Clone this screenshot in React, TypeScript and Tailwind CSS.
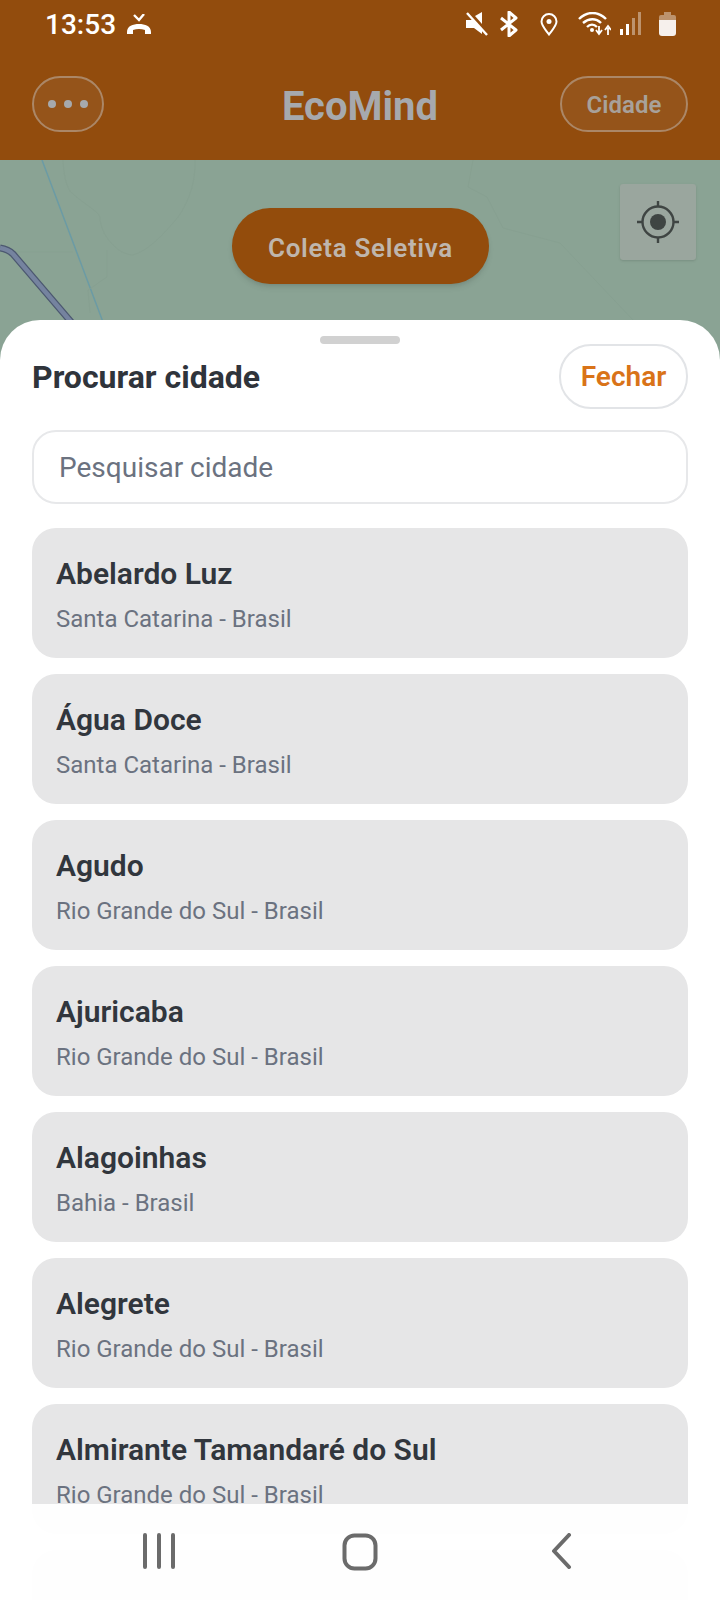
import React from 'react';

const cities = [
  { name: 'Abelardo Luz', state: 'Santa Catarina - Brasil' },
  { name: 'Água Doce', state: 'Santa Catarina - Brasil' },
  { name: 'Agudo', state: 'Rio Grande do Sul - Brasil' },
  { name: 'Ajuricaba', state: 'Rio Grande do Sul - Brasil' },
  { name: 'Alagoinhas', state: 'Bahia - Brasil' },
  { name: 'Alegrete', state: 'Rio Grande do Sul - Brasil' },
  { name: 'Almirante Tamandaré do Sul', state: 'Rio Grande do Sul - Brasil' },
];

const StatusBar = () => (
  <div className="h-[48px] pl-[45px] pr-[44px] flex items-center justify-between text-white">
    <div className="flex items-center gap-[10px] pt-[2px]">
      <span className="text-[28px] font-medium leading-none">13:53</span>
      {/* call ended */}
      <svg width="26" height="22" viewBox="0 0 26 22" fill="none">
        <path d="M8 1l5 5 5-6" stroke="#fff" strokeWidth="2.4" />
        <path d="M1 18c0-6 6-8 12-8s12 2 12 8v2h-6v-4c-4-1.500-8-1.500-12 0v4H1z" fill="#fff" />
      </svg>
    </div>
    <div className="flex items-center">
      {/* mute */}
      <svg width="24" height="24" viewBox="0 0 24 24" fill="none" className="mr-[10px]">
        <path d="M1 8h5l2-1 9 10v5l-8-6H1z M10 4l7-4v12z" fill="#fff" />
        <path d="M2 1l20 22" stroke="#fff" strokeWidth="2.4" />
      </svg>
      {/* bluetooth */}
      <svg width="20" height="26" viewBox="0 0 20 26" fill="none" className="mr-[21px]">
        <path d="M2 7l15 12-7 6V1l7 6L2 19" stroke="#fff" strokeWidth="3" strokeLinejoin="round" />
      </svg>
      {/* location */}
      <svg width="18" height="23" viewBox="0 0 18 23" fill="none" className="mr-[20px]">
        <path d="M9 21.500C5 16 1.500 12.500 1.500 8.500a7.500 7.500 0 0115 0c0 4-3.500 7.500-7.500 13z" stroke="#fff" strokeWidth="2" />
        <circle cx="9" cy="8.500" r="2.500" fill="#fff" />
      </svg>
      {/* wifi with arrows */}
      <svg width="33" height="24" viewBox="0 0 33 24" fill="none" className="mr-[9px]">
        <path d="M1 7c8-8 19-8 27 0" stroke="#fff" strokeWidth="2.400" />
        <path d="M5 11c6-5 13-5 18 0" stroke="#fff" strokeWidth="2.400" />
        <path d="M9 15c3-3 7-3 10 0" stroke="#fff" strokeWidth="2.400" />
        <circle cx="14" cy="18" r="2" fill="#fff" />
        <path d="M21 14v7m-3-3l3 4 3-4" stroke="#fff" strokeWidth="1.800" />
        <path d="M30 23v-7m-3 2l3-4 3 4" stroke="#fff" strokeWidth="1.800" />
      </svg>
      {/* signal */}
      <svg width="22" height="24" viewBox="0 0 22 24" className="mr-[17px]">
        <rect x="0" y="17" width="3" height="6" fill="#fff" />
        <rect x="6" y="12" width="3" height="11" fill="#fff" />
        <rect x="12" y="6" width="3" height="17" fill="#ffffff" fillOpacity="0.4" />
        <rect x="18" y="0" width="3" height="23" fill="#ffffff" fillOpacity="0.4" />
      </svg>
      {/* battery */}
      <svg width="17" height="24" viewBox="0 0 17 24">
        <path d="M5 0h7v3h3a2 2 0 012 2v3H0V5a2 2 0 012-2h3z" fill="#ffffff" fillOpacity="0.4" />
        <path d="M0 8h17v13a3 3 0 01-3 3H3a3 3 0 01-3-3z" fill="#f6f0ec" />
      </svg>
    </div>
  </div>
);

const TopBar = () => (
  <div className="h-[112px] px-[32px] flex items-center justify-between">
    <div className="w-[128px]">
      <div className="w-[72px] h-[56px] rounded-full border-2 border-[#ab8767] bg-[#95541a] flex items-center justify-center gap-[8px]">
        <span className="w-[8px] h-[8px] rounded-full bg-[#a6a9ad]"></span>
        <span className="w-[8px] h-[8px] rounded-full bg-[#a6a9ad]"></span>
        <span className="w-[8px] h-[8px] rounded-full bg-[#a6a9ad]"></span>
      </div>
    </div>
    <div className="pt-[5px] text-[40px] font-bold text-[#a6a9ad] leading-none">EcoMind</div>
    <div className="w-[128px] h-[56px] rounded-full border-2 border-[#ab8767] bg-[#95541a] flex items-center justify-center">
      <span className="pt-[2px] text-[24px] font-semibold text-[#a8a19a]">Cidade</span>
    </div>
  </div>
);

const MapArea = () => (
  <div className="relative h-[200px] -mb-[40px] bg-[#8aa394] overflow-hidden">
    {/* map lines */}
    <svg width="720" height="200" viewBox="0 0 720 200" fill="none" className="absolute inset-0">
      <path d="M42 0 L 106 170" stroke="#6b9ba5" strokeWidth="1.500" />
      <path d="M63 0 C 64 20 68 30 72 33 C 85 45 97 50 100 57 C 100 75 118 95 133 95 C 150 90 165 72 173 63 C 185 50 196 27 195 0" stroke="#87a091" strokeWidth="1" />
      <path d="M10 92 L 73 92 M107 90 L 107 117 L 88 130 L 90 153" stroke="#87a091" strokeWidth="1" />
      <path d="M473 0 L 468 27 L 487 37 L 503 68 L 560 83 L 633 160" stroke="#87a091" strokeWidth="1" />
      <path d="M0 88 C 6 89 10 91 13 94 L 72 163" stroke="#4c5870" strokeWidth="7" />
      <path d="M0 88 C 6 89 10 91 13 94 L 72 163" stroke="#75839f" strokeWidth="4.500" />
    </svg>
    <div className="absolute left-[232px] top-[48px] w-[257px] h-[76px] rounded-full bg-[#934c0c] shadow-md flex items-center justify-center">
      <span className="pt-[5px] text-[26px] font-semibold tracking-[0.7px] text-[#bfb6ad]">Coleta Seletiva</span>
    </div>
    <div className="absolute left-[620px] top-[24px] w-[76px] h-[76px] rounded-[3px] bg-[#9aa69e] shadow-sm flex items-center justify-center">
      <svg width="42" height="42" viewBox="0 0 42 42" fill="none">
        <circle cx="21" cy="21" r="15.500" stroke="#3f4543" strokeWidth="2.400" />
        <circle cx="21" cy="21" r="8" fill="#3f4543" />
        <path d="M21 0v6M21 36v6M0 21h6M36 21h6" stroke="#3f4543" strokeWidth="2.400" />
      </svg>
    </div>
  </div>
);

const CityCard = ({ name, state }: { name: string; state: string }) => (
  <div className="h-[130px] shrink-0 rounded-[24px] bg-[#e6e6e7] pl-[24px] pt-[26px]">
    <div className="text-[30px] font-semibold leading-[40px] text-[#31363d]">{name}</div>
    <div className="mt-[8px] text-[24px] leading-[34px] text-[#6b7280]">{state}</div>
  </div>
);

export default function App() {
  return (
    <div className="relative w-[720px] h-[1600px] overflow-hidden flex flex-col bg-white font-['Roboto',sans-serif]">
      <div className="bg-[#924c0d]">
        <StatusBar />
        <TopBar />
      </div>
      <MapArea />

      {/* Bottom sheet */}
      <div className="relative flex-1 min-h-0 bg-white rounded-t-[40px] px-[32px] flex flex-col">
        <div className="shrink-0 w-[80px] h-[8px] rounded-full bg-[#d1d1d1] mx-auto mt-[16px]"></div>
        <div className="shrink-0 flex items-center justify-between">
          <h2 className="text-[32px] font-bold text-[#2f343b]">Procurar cidade</h2>
          <div className="w-[129px] h-[65px] rounded-[32px] border-2 border-[#e2e4e7] flex items-center justify-center">
            <span className="text-[28px] font-semibold text-[#d97318]">Fechar</span>
          </div>
        </div>
        <div className="shrink-0 mt-[21px] h-[74px] rounded-[24px] border-2 border-[#e7e8ea] pl-[25px] pt-[2px] flex items-center">
          <span className="text-[28px] text-[#6b7280]">Pesquisar cidade</span>
        </div>
        <div className="mt-[24px] flex flex-col gap-[16px] overflow-hidden">
          {cities.map((c) => (
            <CityCard key={c.name} name={c.name} state={c.state} />
          ))}
          <div className="h-[130px] shrink-0 rounded-[24px] bg-[#e6e6e7]"></div>
        </div>

        {/* Android nav bar */}
        <div className="absolute left-0 right-0 bottom-0 h-[96px] bg-white/[0.94] flex items-start justify-between pl-[143px] pr-[148px] pt-[29px]">
          <svg width="32" height="36" viewBox="0 0 32 36" fill="none">
            <path d="M2 2v32M16 2v32M30 2v32" stroke="#6b6b6b" strokeWidth="4" strokeLinecap="round" />
          </svg>
          <svg width="36" height="38" viewBox="0 0 36 38" fill="none" className="-ml-[6px]">
            <rect x="2.500" y="2.500" width="31" height="33" rx="10" stroke="#6b6b6b" strokeWidth="4" />
          </svg>
          <svg width="22" height="36" viewBox="0 0 22 36" fill="none">
            <path d="M19 2L4 18l15 16" stroke="#6b6b6b" strokeWidth="4" strokeLinecap="round" strokeLinejoin="round" />
          </svg>
        </div>
      </div>
    </div>
  );
}
